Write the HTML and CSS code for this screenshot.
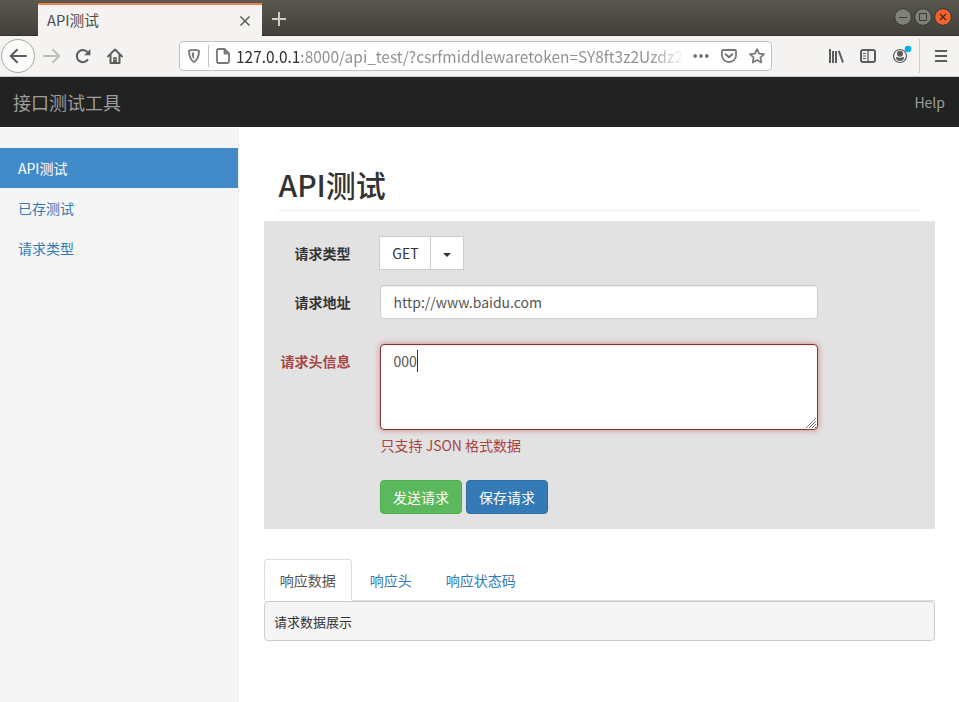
FILE: index.html
```html
<!DOCTYPE html>
<html lang="zh-CN">
<head>
<meta charset="utf-8">
<title>API测试</title>
<link rel="stylesheet" href="styles.css">
</head>
<body>
<div class="titlebar">
  <div class="tab"><span>API测试</span>
    <svg width="12" height="12" viewBox="0 0 12 12"><path d="M1.5 1.5l9 9M10.5 1.5l-9 9" stroke="#5a5a58" stroke-width="1.5" fill="none"/></svg>
  </div>
  <svg class="plus" width="14" height="14" viewBox="0 0 14 14"><path d="M7 0v14M0 7h14" stroke="#cfccc5" stroke-width="2"/></svg>
  <div class="window-buttons">
    <svg width="18" height="18" viewBox="0 0 18 18"><circle cx="9" cy="9" r="8.3" fill="#80807a" stroke="#393832"/><path d="M5 9.5h8" stroke="#3c3b37"/></svg>
    <svg width="18" height="18" viewBox="0 0 18 18"><circle cx="9" cy="9" r="8.3" fill="#80807a" stroke="#393832"/><path d="M5.5 5.5h7v7h-7z" stroke="#3c3b37" fill="none"/></svg>
    <svg width="18" height="18" viewBox="0 0 18 18"><circle cx="9" cy="9" r="8.3" fill="#f0622f" stroke="#393832"/><path d="M6 6l6 6M12 6l-6 6" stroke="#4a251a" stroke-width="1.3"/></svg>
  </div>
</div>
<div class="toolbar">
  <div class="back"><svg width="18" height="16" viewBox="0 0 18 16"><path d="M17 8H2M8 1.7L1.8 8 8 14.3" fill="none" stroke="#5c5c5b" stroke-width="2" stroke-linecap="round" stroke-linejoin="round"/></svg></div>
  <svg class="forward" width="18" height="16" viewBox="0 0 18 16"><path d="M1 8h15M10 1.7L16.2 8 10 14.3" fill="none" stroke="#bdbcba" stroke-width="2" stroke-linecap="round" stroke-linejoin="round"/></svg>
  <svg class="reload" width="16" height="16" viewBox="0 0 16 16"><path d="M13 11.2A6 6 0 1 1 12.4 4.2" fill="none" stroke="#5c5c5b" stroke-width="2"/><path d="M15.4 1v6.2H9.2z" fill="#5c5c5b"/></svg>
  <svg class="home" width="16" height="16" viewBox="0 0 16 16"><path d="M1 8.4L8 1.5l7 6.9M3.5 7v8h9V7" fill="none" stroke="#5c5c5b" stroke-width="2" stroke-linecap="round" stroke-linejoin="round"/><path d="M6.2 14V9.2h3.6V14z" fill="#5c5c5b"/><path d="M8 11v1" stroke="#ddd"/></svg>
  <div class="urlbar">
    <svg class="shield" width="14" height="16" viewBox="0 0 14 16"><path d="M7 1.8c2 0 4 .4 5 .9 0 5.500-.8 8.800-5 11.300-4.200-2.500-5-5.800-5-11.300 1-.5 3-.9 5-.9z" fill="none" stroke="#787878" stroke-width="1.800"/><path d="M7 4.300v7c-1.600-1.500-2.200-3-2.200-6.600z" fill="#787878"/></svg>
    <i class="divider"></i>
    <svg class="page" width="16" height="16" viewBox="0 0 16 16"><path d="M3.500 1H9.500L14 5.500V13.500Q14 15 12.500 15H3.500Q2 15 2 13.500V2.500Q2 1 3.500 1zM9.500 1.500V5.500H13.500" fill="none" stroke="#777" stroke-width="1.800" stroke-linejoin="round"/></svg>
    <div class="url"><b>127.0.0.1</b>:8000/api_test/?csrfmiddlewaretoken=SY8ft3z2Uzdz27</div>
    <svg class="dots" width="16" height="6" viewBox="0 0 16 6"><circle cx="2.200" cy="3" r="1.900"/><circle cx="8" cy="3" r="1.900"/><circle cx="13.800" cy="3" r="1.900"/></svg>
    <svg class="pocket" width="16" height="16" viewBox="0 0 16 16"><path d="M2 2h12q1 0 1 1v4.500a7 6.500 0 0 1-14 0V3q0-1 1-1z" fill="none" stroke="#777" stroke-width="1.800"/><path d="M4.700 6.200L8 9.300l3.300-3.100" fill="none" stroke="#777" stroke-width="2" stroke-linecap="round" stroke-linejoin="round"/></svg>
    <svg class="star" width="16" height="16" viewBox="0 0 16 16"><path d="M8 1.200l2.100 4.400 4.900.6-3.600 3.400.9 4.900L8 12.100l-4.300 2.400.9-4.900L1 6.200l4.900-.6z" fill="none" stroke="#777" stroke-width="1.700" stroke-linejoin="round"/></svg>
  </div>
  <div class="tools">
    <svg width="16" height="16" viewBox="0 0 16 16"><path d="M2 1v14M5 3v12M8 3v12M10.800 2.800L15 14.500" stroke="#5c5c5b" stroke-width="2"/></svg>
    <svg width="16" height="16" viewBox="0 0 16 16"><rect x="1" y="2" width="14" height="12" rx="2" fill="none" stroke="#5c5c5b" stroke-width="2"/><path d="M8 2v12" stroke="#5c5c5b" stroke-width="1.300"/><path d="M3 5.500h3M3 8h3M3 10.500h3" stroke="#5c5c5b"/></svg>
    <svg width="22" height="22" viewBox="0 0 22 22"><circle cx="9" cy="13" r="6.500" fill="none" stroke="#5c5c5b" stroke-width="1.200"/><circle cx="9" cy="10.700" r="3" fill="#5c5c5b"/><path d="M4.700 14.500q1-.8 2.200-.3 2 1.200 4.200 0 1.200-.5 2.200.3-1 3.500-4.300 3.500t-4.300-3.500z" fill="#5c5c5b"/><circle cx="17" cy="6" r="3.300" fill="#00adee"/></svg>
    <i></i>
    <svg width="12" height="14" viewBox="0 0 12 14"><path d="M0 2h12M0 7h12M0 12h12" stroke="#5c5c5b" stroke-width="2"/></svg>
  </div>
</div>
<nav class="navbar"><span class="brand">接口测试工具</span><a>Help</a></nav>
<div class="content">
  <aside class="sidebar"><a class="active">API测试</a><a>已存测试</a><a>请求类型</a></aside>
  <main>
    <h1>API测试</h1>
    <form class="request">
      <div class="row type"><label>请求类型</label><div class="group"><span>GET</span><span class="toggle"><i></i></span></div></div>
      <div class="row address"><label>请求地址</label><div class="field">http://www.baidu.com</div></div>
      <div class="row headers"><label>请求头信息</label>
        <div><div class="field area"><span>000</span>
          <svg class="grip" width="12" height="12" viewBox="0 0 12 12"><path d="M1 11L11 1M4 11l7-7M7 11l4-4M10 11l1-1" stroke="#777" fill="none"/></svg></div>
          <p>只支持 JSON 格式数据</p></div>
      </div>
      <div class="actions"><span class="btn send">发送请求</span><span class="btn save">保存请求</span></div>
    </form>
    <div class="tabs"><a class="current">响应数据</a><a>响应头</a><a>响应状态码</a></div>
    <pre>请求数据展示</pre>
  </main>
</div>
</body>
</html>
```
FILE: styles.css
```css
* { box-sizing: border-box; }
body { margin: 0; width: 959px; height: 702px; overflow: hidden; background: #fff; color: #333; font: 14px/20px "Noto Sans CJK SC", sans-serif; }
svg { display: block; flex: none; }
.titlebar { display: flex; height: 36px; padding-left: 38px; background: linear-gradient(#5a584f, #403f3a); box-shadow: inset 0 -1px #302f2b; }
.tab { display: flex; justify-content: space-between; align-items: center; width: 224px; height: 33px; margin-top: 3px; padding: 0 11px 0 9px; background: #f4f3f2; border-top: 2px solid #ec8054; color: #4c4c4c; font-size: 14.667px; }
.tab span { margin-top: -2px; }
.tab svg { margin-top: 1px; }
.plus { margin: 12px 0 0 10px; }
.window-buttons { display: flex; gap: 2px; margin: 8px 7px 0 auto; }
.toolbar { display: flex; align-items: center; height: 41px; background: #f4f3f2; border-bottom: 1px solid #c9c6c3; }
.back { display: flex; align-items: center; justify-content: center; width: 34px; height: 34px; margin-left: 1px; border: 1px solid #aaa9a7; border-radius: 50%; background: #fbfbfa; }
.forward { margin-left: 8px; }
.reload { margin-left: 14px; }
.home { margin-left: 16px; }
.urlbar { display: flex; align-items: center; width: 593px; height: 30px; margin-left: 56px; padding-left: 7px; border: 1px solid #c4c2c0; border-radius: 4px; background: #fff; }
.divider { width: 1px; height: 22px; margin: 0 6px 0 7px; background: #c5c5c5; }
.url { width: 450px; height: 26px; margin: 0 -6px 0 5px; overflow: hidden; white-space: nowrap; font-size: 15.46px; line-height: 26px; color: #929292; -webkit-mask-image: linear-gradient(to right, #000 415px, transparent 449px); mask-image: linear-gradient(to right, #000 415px, transparent 449px); }
.url b { font-weight: 400; color: #2e2e2e; }
.dots { margin-left: 13px; fill: #777; }
.pocket { margin-left: 12px; }
.star { margin-left: 12px; }
.tools { display: flex; align-items: center; margin: 0 12px 0 auto; }
.tools svg:nth-child(2) { margin-left: 16px; }
.tools svg:nth-child(3) { margin: -4px 0 0 15px; }
.tools i { width: 1px; height: 34px; margin: 0 15px 0 6px; background: #cbc9c7; }
.navbar { display: flex; justify-content: space-between; align-items: center; height: 50px; padding: 0 14px 1px 13px; background: #222; color: #9d9d9d; }
.brand { font-size: 18px; }
.content { display: flex; height: 575px; }
.sidebar { width: 239px; margin-top: 1px; padding-top: 20px; background: #f5f5f5; border-right: 1px solid #eee; }
.sidebar a { display: block; height: 40px; padding: 10px 18px; color: #337ab7; }
.sidebar .active { color: #fff; background: #428bca; }
main { flex: 1; padding: 39px 24px 0 25px; }
h1 { height: 45px; margin: 0 15px 10px 14px; border-bottom: 1px solid #eee; font-size: 30px; line-height: 37px; font-weight: 500; text-indent: 0.5px; }
.request { height: 308px; padding-top: 15px; background: #e2e2e2; }
.row { display: flex; }
label { width: 86.5px; margin-right: 29.5px; padding-top: 7px; font-weight: 700; text-align: right; }
.type { height: 34px; margin-bottom: 15px; }
.group { display: flex; margin-left: -1px; border: 1px solid #ccc; background: #fff; }
.group span { width: 50px; line-height: 32px; text-align: center; padding-left: 1px; }
.group .toggle { display: flex; align-items: center; justify-content: center; width: 33px; padding-left: 0; border-left: 1px solid #ccc; }
.toggle i { margin-top: 4px; border: 4px solid transparent; border-top-color: #333; border-bottom: 0; }
.field { width: 438px; height: 34px; padding: 6px 12.5px; border: 1px solid #ccc; border-radius: 4px; background: #fff; color: #555; box-shadow: inset 0 1px 1px #00000013; }
.address { margin-bottom: 25px; }
.headers { height: 136px; color: #a94442; }
.area { position: relative; height: 86px; border-color: #843534; box-shadow: inset 0 1px 1px #00000013, 0 0 6px #ce8483; }
.area span { display: inline-block; height: 22px; padding-top: 1px; margin-top: -2px; border-right: 1px solid #333; }
.grip { position: absolute; right: 0; bottom: 0; }
.headers p { margin: 5px 0 0 0.5px; }
.actions { display: flex; gap: 4px; padding-left: 116px; }
.btn { width: 82px; height: 34px; padding-top: 6px; border: 1px solid #4cae4c; border-radius: 4px; background: #5cb85c; color: #fff; text-align: center; }
.save { border-color: #2e6da4; background: #337ab7; }
.tabs { display: flex; height: 42px; margin-top: 30px; border-bottom: 1px solid #ddd; }
.tabs a { height: 42px; margin-right: 2px; padding: 10px 15.3px 11px 14.7px; border: 1px solid transparent; border-radius: 4px 4px 0 0; color: #337ab7; }
.tabs .current { border-color: #ddd #ddd transparent; background: #fff; color: #555; }
pre { height: 40px; margin: 0; padding: 10px 9px; border: 1px solid #ccc; border-radius: 4px; background: #f5f5f5; color: #333; font: 13px/19px "Noto Sans CJK SC", sans-serif; }
```
